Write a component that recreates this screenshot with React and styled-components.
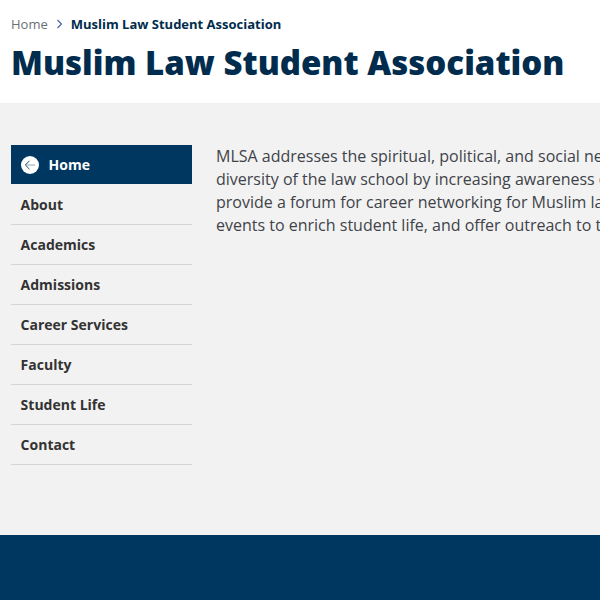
import React from "react";
import styled, { createGlobalStyle } from "styled-components";

const Global = createGlobalStyle`
  html, body { margin: 0; padding: 0; background: #f2f2f2; }
  body { font-family: "Open Sans", "Liberation Sans", sans-serif; }
  #root { width: 600px; height: 600px; overflow: hidden; }
`;
const Page = styled.div`
  width: 600px; height: 600px; display: flex; flex-direction: column; overflow: hidden;
`;
const Header = styled.header`
  height: 103px; background: #fff; padding: 15px 11px 0; box-sizing: border-box; flex: none; white-space: nowrap;
`;
const Crumbs = styled.nav`
  display: flex; align-items: center; height: 18px; font-size: 13px; line-height: 18px;
`;
const CrumbLink = styled.span`color: #6b6f76;`;
const CrumbCurrent = styled.span`color: #012c4d; font-weight: 700;`;
const Chevron = styled.svg`
  width: 7px; height: 10px; margin: 0 8px 0 8px; flex: none;
`;
const Title = styled.h1`
  margin: 4px 0 0; font-size: 33px; line-height: 52px; font-weight: 800; color: #012c4d; letter-spacing: 0;
`;
const Main = styled.main`
  flex: 1; display: flex; padding: 42px 0 0 11px; min-height: 0;
`;
const Sidebar = styled.ul`
  list-style: none; margin: 0; padding: 0; width: 181px; flex: none;
`;
const Active = styled.li`
  height: 39px; background: #003761; color: #fff; display: flex; align-items: center; gap: 9.6px;
  padding-left: 10px; font-size: 14px; font-weight: 700; margin-bottom: 1px;
`;
const Item = styled.li`
  height: 39px; border-bottom: 1px solid #d4d4d4; color: #333; display: flex; align-items: center;
  padding-left: 9.6px; font-size: 14px; font-weight: 700; margin-bottom: 0; box-sizing: content-box;
`;
const Circle = styled.span`
  width: 18px; height: 18px; border-radius: 50%; background: #fff; display: flex; align-items: center; justify-content: center;
`;
const Body = styled.div`
  margin-left: 24px; font-size: 16px; line-height: 23px; color: #3f4349; white-space: nowrap; margin-top: 0;
`;
const Line = styled.div``;
const Footer = styled.footer`
  height: 65px; background: #003761; flex: none;
`;

const items = ["About", "Academics", "Admissions", "Career Services", "Faculty", "Student Life", "Contact"];

export default function App() {
  return (
    <Page>
      <Global />
      <Header>
        <Crumbs>
          <CrumbLink>Home</CrumbLink>
          <Chevron viewBox="0 0 7 10"><path d="M1.5 1l4 4-4 4" fill="none" stroke="#3f62a0" strokeWidth="1.1" /></Chevron>
          <CrumbCurrent>Muslim Law Student Association</CrumbCurrent>
        </Crumbs>
        <Title>Muslim Law Student Association</Title>
      </Header>
      <Main>
        <Sidebar>
          <Active>
            <Circle>
              <svg width="12" height="12" viewBox="0 0 12 12">
                <path d="M11 6H2" fill="none" stroke="#a9bcc9" strokeWidth="1.3" />
                <path d="M5.5 1.8L1.3 6l4.2 4.2" fill="none" stroke="#1c4d73" strokeWidth="1" />
              </svg>
            </Circle>
            Home
          </Active>
          {items.map((t) => <Item key={t}>{t}</Item>)}
        </Sidebar>
        <Body>
          <Line>MLSA addresses the spiritual, political, and social needs of Muslim students, enhances the</Line>
          <Line>diversity of the law school by increasing awareness of Islam and Muslim communities, and</Line>
          <Line>provide a forum for career networking for Muslim law students and alumni. We host</Line>
          <Line>events to enrich student life, and offer outreach to the wider community.</Line>
        </Body>
      </Main>
      <Footer />
    </Page>
  );
}
